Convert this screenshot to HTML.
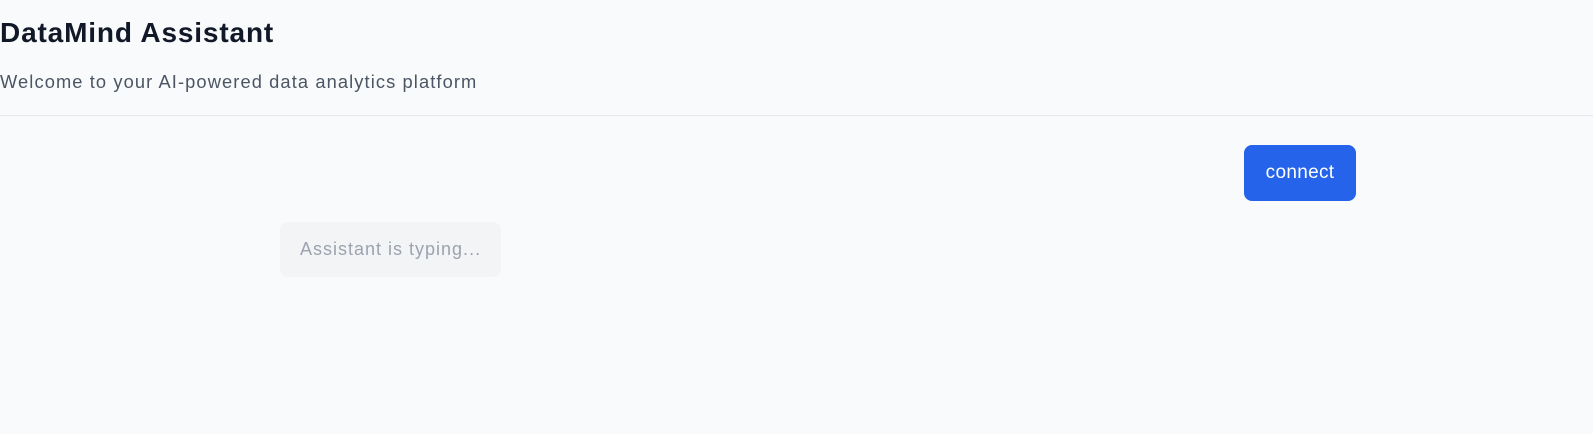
<!DOCTYPE html>
<html><head><style>
html,body{margin:0;padding:0;background:#f9fafb;width:1593px;height:434px;overflow:hidden;font-family:"Liberation Sans",sans-serif}
.h{position:absolute;left:0;top:0;width:1593px;height:115px;border-bottom:1px solid #e5e7eb}
h1{position:absolute;left:0;top:17px;margin:0;font-size:28px;font-weight:bold;color:#111827;letter-spacing:0.85px}
p{position:absolute;left:0;top:71px;margin:0;font-size:18.3px;color:#4b5563;letter-spacing:1.1px}
.btn{position:absolute;left:1244px;top:145px;width:112px;height:56px;background:#2563eb;border-radius:8px;color:#fff;font-size:19px;line-height:56px;text-align:center;letter-spacing:0.3px}
.bub{position:absolute;left:280px;top:222px;width:221px;height:55px;background:#f3f4f6;border-radius:8px;color:#9ca3af;font-size:18px;line-height:55px;padding-left:20px;box-sizing:border-box;letter-spacing:1px}
</style></head><body>
<div class="h"><h1>DataMind Assistant</h1><p>Welcome to your AI-powered data analytics platform</p></div>
<div class="btn">connect</div>
<div class="bub">Assistant is typing...</div>
</body></html>
